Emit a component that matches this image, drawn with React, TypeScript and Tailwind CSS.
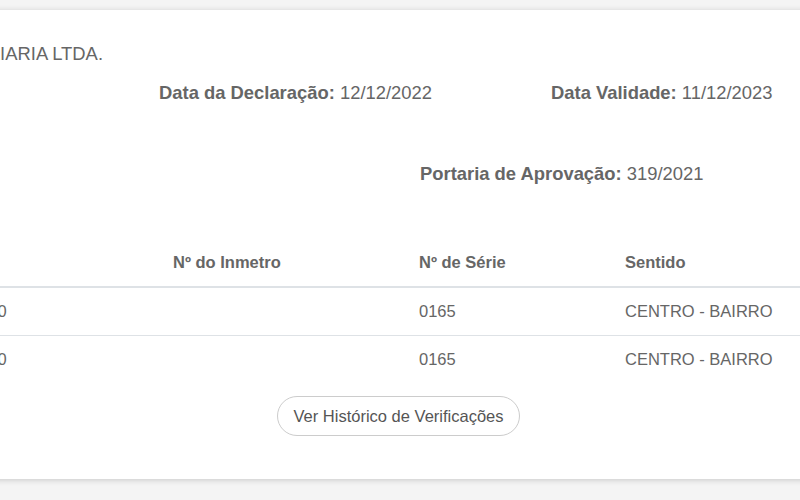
import React from 'react';

type Row = { id: string; inmetro: string; serie: string; sentido: string };

const rows: Row[] = [
    { id: 'ETR-0002010', inmetro: '', serie: '0165', sentido: 'CENTRO - BAIRRO' },
    { id: 'ETR-0002010', inmetro: '', serie: '0165', sentido: 'CENTRO - BAIRRO' },
];

const Info = ({ label, value }: { label: string; value: string }) => (
    <span className="whitespace-nowrap">
        <span className="font-bold">{label}</span> {value}
    </span>
);

export default function App() {
    return (
        <div
            className="w-[800px] h-[500px] overflow-hidden bg-[#f4f4f4] pt-[10px] text-[#666]"
            style={{ fontFamily: '"Liberation Sans", Arial, sans-serif' }}
        >
            {/* Card (left part is scrolled out of view) */}
            <div className="-ml-[120px] w-[1037px] h-[469px] bg-white shadow-[0_1px_6px_rgba(0,0,0,0.18)] pt-[30px]">
                {/* Company */}
                <div className="w-[223px] text-right whitespace-nowrap text-[18.4px] leading-[27px]">
                    IMOBILIARIA LTDA.
                </div>

                {/* Declaration dates */}
                <div className="mt-[12px] flex pl-[279px] text-[18.4px] leading-[27px]">
                    <div className="w-[392px]">
                        <Info label="Data da Declaração:" value="12/12/2022" />
                    </div>
                    <Info label="Data Validade:" value="11/12/2023" />
                </div>

                <div className="mt-[54px] pl-[540px] text-[18.4px] leading-[27px]">
                    <Info label="Portaria de Aprovação:" value="319/2021" />
                </div>

                {/* Equipment table */}
                <div className="mt-[51px] text-[16.5px] leading-6">
                    <div className="grid grid-cols-[281px_246px_206px_1fr] border-b-2 border-[#dee2e6] font-bold">
                        <div className="p-3 pl-[24px] whitespace-nowrap">Código</div>
                        <div className="p-3 whitespace-nowrap">Nº do Inmetro</div>
                        <div className="p-3 whitespace-nowrap">Nº de Série</div>
                        <div className="p-3 whitespace-nowrap">Sentido</div>
                    </div>
                    {rows.map((row, i) => (
                        <div
                            key={i}
                            className={
                                'grid grid-cols-[281px_246px_206px_1fr] ' +
                                (i > 0 ? 'border-t border-[#dee2e6]' : '')
                            }
                        >
                            <div className="pt-[10.5px] pb-[12.5px] px-3 pl-[24px] whitespace-nowrap">{row.id}</div>
                            <div className="pt-[10.5px] pb-[12.5px] px-3 whitespace-nowrap">{row.inmetro}</div>
                            <div className="pt-[10.5px] pb-[12.5px] px-3 whitespace-nowrap">{row.serie}</div>
                            <div className="pt-[10.5px] pb-[12.5px] px-3 whitespace-nowrap">{row.sentido}</div>
                        </div>
                    ))}
                </div>

                <div className="mt-[13px] flex justify-center">
                    <button className="h-[40px] px-[15px] rounded-full border border-[#ccc] bg-white text-[16.5px] text-[#555] whitespace-nowrap">
                        Ver Histórico de Verificações
                    </button>
                </div>
            </div>
        </div>
    );
}
